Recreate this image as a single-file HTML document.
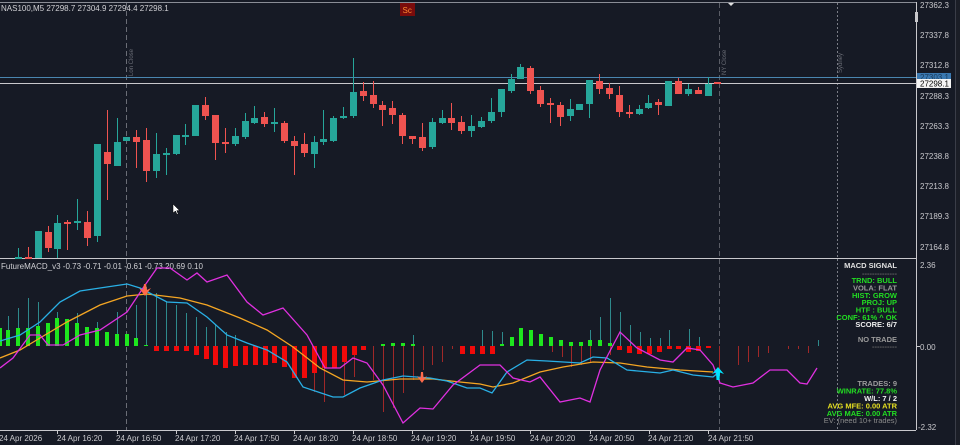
<!DOCTYPE html>
<html><head><meta charset="utf-8"><style>
html,body{margin:0;padding:0;background:#161a25;overflow:hidden}
svg{display:block}
text{font-family:"Liberation Sans",sans-serif}
</style></head><body>
<svg width="960" height="445" viewBox="0 0 960 445" xmlns="http://www.w3.org/2000/svg">
<rect width="960" height="445" fill="#161a25"/>
<rect x="955" y="0" width="5" height="445" fill="#1b1e27"/>
<line x1="955.5" y1="0" x2="955.5" y2="445" stroke="#3a3d48"/>
<!-- borders -->
<line x1="0" y1="2.5" x2="916" y2="2.5" stroke="#8a8d96"/>
<line x1="916.5" y1="2" x2="916.5" y2="430" stroke="#c8c8cc"/>
<line x1="0" y1="258.5" x2="916" y2="258.5" stroke="#c8c8cc"/>
<line x1="0" y1="430.5" x2="916" y2="430.5" stroke="#c8c8cc"/>
<rect x="915" y="12" width="3" height="10" fill="#c8c8cc"/>
<!-- session lines -->
<line x1="126.5" y1="3" x2="126.5" y2="430" stroke="#6a6d76" stroke-dasharray="5,3"/>
<line x1="719.5" y1="3" x2="719.5" y2="430" stroke="#5a5d66" stroke-dasharray="5,3"/>
<line x1="837.5" y1="3" x2="837.5" y2="430" stroke="#7a7d86" stroke-dasharray="2,2"/>
<text transform="translate(133,76) rotate(-90)" font-size="6" fill="#6a6d76">Lon Close</text>
<text transform="translate(726,75) rotate(-90)" font-size="6" fill="#6a6d76">NY Close</text>
<text transform="translate(842,73) rotate(-90)" font-size="6" fill="#6a6d76">Sydney</text>
<!-- price lines -->
<line x1="0" y1="77.5" x2="916" y2="77.5" stroke="#4a86b0"/>
<line x1="0" y1="83.5" x2="916" y2="83.5" stroke="#c8c8cc"/>
<!-- candles green -->
<g fill="#26a69a">
<rect x="18" y="248" width="1" height="11"/><rect x="15" y="257" width="7" height="2"/>
<rect x="38" y="231" width="1" height="27"/><rect x="35" y="231" width="7" height="27"/>
<rect x="57" y="215" width="1" height="43"/><rect x="54" y="223" width="7" height="26"/>
<rect x="77" y="199" width="1" height="31"/><rect x="74" y="221" width="7" height="2"/>
<rect x="97" y="144" width="1" height="98"/><rect x="94" y="144" width="7" height="92"/>
<rect x="117" y="118" width="1" height="48"/><rect x="114" y="142" width="7" height="24"/>
<rect x="123" y="137" width="7" height="4"/>
<rect x="156" y="133" width="1" height="45"/><rect x="153" y="154" width="7" height="17"/>
<rect x="166" y="148" width="1" height="27"/><rect x="163" y="153" width="7" height="2"/>
<rect x="176" y="135" width="1" height="20"/><rect x="173" y="135" width="7" height="19"/>
<rect x="185" y="124" width="1" height="21"/><rect x="182" y="135" width="7" height="2"/>
<rect x="192" y="105" width="7" height="31"/>
<rect x="235" y="128" width="1" height="18"/><rect x="232" y="136" width="7" height="8"/>
<rect x="245" y="113" width="1" height="26"/><rect x="242" y="121" width="7" height="16"/>
<rect x="254" y="106" width="1" height="18"/><rect x="251" y="118" width="7" height="5"/>
<rect x="274" y="108" width="1" height="24"/><rect x="271" y="122" width="7" height="2"/>
<rect x="314" y="136" width="1" height="32"/><rect x="311" y="142" width="7" height="12"/>
<rect x="323" y="110" width="1" height="35"/><rect x="320" y="139" width="7" height="3"/>
<rect x="333" y="116" width="1" height="26"/><rect x="330" y="118" width="7" height="23"/>
<rect x="343" y="107" width="1" height="12"/><rect x="340" y="116" width="7" height="2"/>
<rect x="353" y="58" width="1" height="60"/><rect x="350" y="92" width="7" height="24"/>
<rect x="432" y="118" width="1" height="31"/><rect x="429" y="122" width="7" height="25"/>
<rect x="442" y="110" width="1" height="14"/><rect x="439" y="118" width="7" height="5"/>
<rect x="471" y="115" width="1" height="22"/><rect x="468" y="126" width="7" height="5"/>
<rect x="481" y="117" width="1" height="11"/><rect x="478" y="121" width="7" height="6"/>
<rect x="491" y="98" width="1" height="25"/><rect x="488" y="112" width="7" height="9"/>
<rect x="501" y="89" width="1" height="28"/><rect x="498" y="89" width="7" height="23"/>
<rect x="511" y="74" width="1" height="19"/><rect x="508" y="79" width="7" height="12"/>
<rect x="517" y="67" width="7" height="12"/><rect x="520" y="64" width="1" height="4"/>
<rect x="570" y="99" width="1" height="22"/><rect x="567" y="109" width="7" height="7"/>
<rect x="576" y="104" width="7" height="6"/>
<rect x="589" y="80" width="1" height="38"/><rect x="586" y="80" width="7" height="24"/>
<rect x="639" y="105" width="1" height="10"/><rect x="636" y="109" width="7" height="5"/>
<rect x="648" y="95" width="1" height="14"/><rect x="645" y="103" width="7" height="5"/>
<rect x="665" y="81" width="7" height="25"/>
<rect x="688" y="84" width="1" height="12"/><rect x="685" y="89" width="7" height="5"/>
<rect x="708" y="77" width="1" height="19"/><rect x="705" y="84" width="7" height="12"/>
</g>
<g fill="#ef5350">
<rect x="28" y="247" width="1" height="12"/><rect x="25" y="257" width="7" height="2"/>
<rect x="48" y="226" width="1" height="26"/><rect x="45" y="232" width="7" height="16"/>
<rect x="67" y="220" width="1" height="30"/><rect x="64" y="222" width="7" height="2"/>
<rect x="87" y="211" width="1" height="35"/><rect x="84" y="222" width="7" height="16"/>
<rect x="107" y="110" width="1" height="90"/><rect x="104" y="152" width="7" height="12"/>
<rect x="136" y="130" width="1" height="38"/><rect x="133" y="137" width="7" height="5"/>
<rect x="146" y="128" width="1" height="54"/><rect x="143" y="140" width="7" height="31"/>
<rect x="205" y="97" width="1" height="23"/><rect x="202" y="105" width="7" height="11"/>
<rect x="215" y="115" width="1" height="45"/><rect x="212" y="115" width="7" height="28"/>
<rect x="225" y="128" width="1" height="25"/><rect x="222" y="142" width="7" height="2"/>
<rect x="264" y="112" width="1" height="15"/><rect x="261" y="117" width="7" height="7"/>
<rect x="284" y="121" width="1" height="22"/><rect x="281" y="123" width="7" height="18"/>
<rect x="294" y="136" width="1" height="39"/><rect x="291" y="141" width="7" height="5"/>
<rect x="304" y="133" width="1" height="24"/><rect x="301" y="144" width="7" height="9"/>
<rect x="363" y="82" width="1" height="19"/><rect x="360" y="91" width="7" height="5"/>
<rect x="373" y="81" width="1" height="27"/><rect x="370" y="95" width="7" height="9"/>
<rect x="382" y="101" width="1" height="25"/><rect x="379" y="105" width="7" height="5"/>
<rect x="392" y="101" width="1" height="23"/><rect x="389" y="108" width="7" height="7"/>
<rect x="402" y="113" width="1" height="31"/><rect x="399" y="115" width="7" height="21"/>
<rect x="412" y="136" width="1" height="8"/><rect x="409" y="136" width="7" height="3"/>
<rect x="422" y="123" width="1" height="28"/><rect x="419" y="137" width="7" height="11"/>
<rect x="451" y="103" width="1" height="27"/><rect x="448" y="118" width="7" height="5"/>
<rect x="461" y="116" width="1" height="18"/><rect x="458" y="122" width="7" height="9"/>
<rect x="530" y="66" width="1" height="28"/><rect x="527" y="68" width="7" height="23"/>
<rect x="540" y="86" width="1" height="21"/><rect x="537" y="90" width="7" height="14"/>
<rect x="550" y="98" width="1" height="25"/><rect x="547" y="103" width="7" height="2"/>
<rect x="560" y="102" width="1" height="24"/><rect x="557" y="105" width="7" height="12"/>
<rect x="599" y="74" width="1" height="20"/><rect x="596" y="81" width="7" height="8"/>
<rect x="609" y="83" width="1" height="16"/><rect x="606" y="88" width="7" height="6"/>
<rect x="619" y="86" width="1" height="31"/><rect x="616" y="95" width="7" height="17"/>
<rect x="629" y="105" width="1" height="13"/><rect x="626" y="112" width="7" height="2"/>
<rect x="658" y="99" width="1" height="16"/><rect x="655" y="102" width="7" height="3"/>
<rect x="678" y="78" width="1" height="16"/><rect x="675" y="81" width="7" height="13"/>
<rect x="698" y="87" width="1" height="7"/><rect x="695" y="90" width="7" height="4"/>
<rect x="714" y="82" width="7" height="2"/>
</g>
<!-- cursor -->
<path d="M173 204 L173 213 L175.5 211 L177 214.5 L178.2 214 L176.8 210.6 L179.5 210.5 Z" fill="#fff" stroke="#000" stroke-width="0.5"/>
<!-- header -->
<text x="1" y="11" font-size="8" fill="#d0d0d4">NAS100,M5  27298.7 27304.9 27294.4 27298.1</text>
<rect x="400" y="3" width="15" height="13" fill="#7a0c0c"/>
<text x="402.5" y="13" font-size="8" fill="#ff8a30">Sc</text>
<path d="M728 3 L734 3 L731 6 Z" fill="#e0e0e0"/>
<!-- price axis -->
<g font-size="8" fill="#c8c8cc">
<text x="920" y="8">27362.3</text>
<text x="920" y="38">27337.8</text>
<text x="920" y="68">27312.8</text>
<text x="920" y="99">27288.3</text>
<text x="920" y="129">27263.3</text>
<text x="920" y="159">27238.8</text>
<text x="920" y="189">27213.8</text>
<text x="920" y="219">27189.3</text>
<text x="920" y="250">27164.8</text>
</g>
<rect x="917" y="73" width="34" height="8" fill="#3a78b0"/>
<text x="920" y="80" font-size="8" fill="#1a3a5a">27303.1</text>
<rect x="917" y="79" width="34" height="9" fill="#f4f4f4"/>
<text x="920" y="86.5" font-size="8" fill="#000">27298.1</text>
<g font-size="8" fill="#c8c8cc">
<text x="920" y="268">2.36</text>
<text x="920" y="350">0.00</text>
<text x="918" y="430">-2.32</text>
</g>
<line x1="916" y1="346.5" x2="920" y2="346.5" stroke="#c8c8cc"/>
<!-- indicator label -->
<text x="1" y="269" font-size="8" fill="#d0d0d4">FutureMACD_v3 -0.73 -0.71 -0.01 -0.61 -0.73 20.69 0.10</text>
<!-- thin teal projections -->
<g stroke="#2e8a8c" stroke-width="1">
<path d="M8.5 316V346M18.5 308V346M28.5 298V346M38.5 302V346M57.5 312V346M77.5 313V346M97.5 322V346M117.5 312V346M136.5 305V346M146.5 287V346M156.5 293V346M166.5 302V346M176.5 305V346M186.5 313V346M196.5 317V346M206.5 327V346M215.5 325V346M226.5 332V346M235.5 335V346M413.5 335V346M482.5 330V346M492.5 331V346M502.5 332V346M590.5 330V346M600.5 317V346M610.5 298V346M620.5 312V346M630.5 325V346M640.5 332V346M650.5 338V346M660.5 338V346M669.5 330V346M689.5 329V346M699.5 337V346M818.5 340V346"/>
</g>
<!-- thin dark red -->
<g stroke="#a02828" stroke-width="1">
<path d="M314.5 346V392M324.5 346V402M334.5 346V365M344.5 346V395M354.5 346V377M373.5 346V380M383.5 346V412M393.5 346V408M403.5 346V393M413.5 346V380M423.5 346V370M432.5 346V365M442.5 346V362M452.5 346V349M552.5 346V352M562.5 346V357M571.5 346V367M581.5 346V365M590.5 346V363M610.5 346V355M719.5 346V370M738.5 346V365M748.5 346V362M758.5 346V357M768.5 346V353M788.5 346V349M798.5 346V349M808.5 346V353"/>
</g>
<!-- green hist -->
<g fill="#1ee61e">
<rect x="-2" y="328" width="4" height="18"/>
<rect x="6" y="330" width="4" height="16"/><rect x="16" y="328" width="4" height="18"/><rect x="26" y="328" width="4" height="18"/>
<rect x="36" y="326" width="4" height="20"/><rect x="46" y="323" width="4" height="23"/><rect x="55" y="318" width="4" height="28"/>
<rect x="65" y="319" width="4" height="27"/><rect x="75" y="323" width="4" height="23"/><rect x="85" y="327" width="4" height="19"/>
<rect x="95" y="328" width="4" height="18"/><rect x="105" y="332" width="4" height="14"/><rect x="115" y="334" width="4" height="12"/>
<rect x="125" y="334" width="4" height="12"/><rect x="134" y="338" width="4" height="8"/><rect x="144" y="345" width="4" height="1"/>
<rect x="381" y="344" width="4" height="2"/><rect x="391" y="343" width="4" height="3"/><rect x="401" y="343" width="4" height="3"/><rect x="411" y="344" width="4" height="2"/>
<rect x="500" y="344" width="4" height="2"/><rect x="510" y="337" width="4" height="9"/><rect x="519" y="328" width="4" height="18"/>
<rect x="529" y="330" width="4" height="16"/><rect x="539" y="334" width="4" height="12"/><rect x="549" y="337" width="4" height="9"/>
<rect x="559" y="340" width="4" height="6"/><rect x="569" y="342" width="4" height="4"/><rect x="579" y="342" width="4" height="4"/>
<rect x="588" y="340" width="4" height="6"/><rect x="598" y="340" width="4" height="6"/><rect x="608" y="343" width="4" height="3"/>
</g>
<!-- red hist -->
<g fill="#f00a0a">
<rect x="154" y="346" width="5" height="5"/><rect x="164" y="346" width="5" height="5"/><rect x="174" y="346" width="5" height="5"/>
<rect x="184" y="346" width="5" height="5"/><rect x="194" y="346" width="5" height="9"/><rect x="204" y="346" width="5" height="13"/>
<rect x="213" y="346" width="5" height="19"/><rect x="223" y="346" width="5" height="22"/><rect x="233" y="346" width="5" height="20"/>
<rect x="243" y="346" width="5" height="19"/><rect x="253" y="346" width="5" height="19"/><rect x="263" y="346" width="5" height="19"/>
<rect x="272" y="346" width="5" height="17"/><rect x="282" y="346" width="5" height="21"/><rect x="292" y="346" width="5" height="32"/>
<rect x="302" y="346" width="5" height="32"/><rect x="312" y="346" width="5" height="27"/><rect x="322" y="346" width="5" height="22"/>
<rect x="332" y="346" width="5" height="22"/><rect x="342" y="346" width="5" height="16"/><rect x="352" y="346" width="5" height="9"/>
<rect x="361" y="346" width="5" height="4"/>
<rect x="460" y="346" width="5" height="8"/><rect x="470" y="346" width="5" height="8"/><rect x="480" y="346" width="5" height="8"/><rect x="490" y="346" width="5" height="8"/>
<rect x="617" y="346" width="5" height="4"/><rect x="627" y="346" width="5" height="7"/><rect x="637" y="346" width="5" height="8"/>
<rect x="647" y="346" width="5" height="8"/><rect x="657" y="346" width="5" height="6"/><rect x="667" y="346" width="5" height="3"/>
<rect x="676" y="346" width="5" height="3"/><rect x="686" y="346" width="5" height="6"/><rect x="696" y="346" width="5" height="5"/><rect x="706" y="346" width="5" height="2"/>
</g>
<!-- lines -->
<polyline fill="none" stroke="#f5a623" stroke-width="1.3" points="0,358 20,350 40,338 67,322 100,305 127,296 147,294 180,298 207,305 240,318 267,330 293,347 320,368 343,380 367,382 400,379 433,379 460,382 480,384 493,387 513,383 540,372 563,367 593,362 620,363 647,367 680,370 713,372"/>
<polyline fill="none" stroke="#29b0e6" stroke-width="1.3" points="0,341 20,335 40,322 60,302 80,291 100,288 127,284 140,288 167,302 187,303 207,317 227,335 247,343 267,350 287,362 303,387 333,397 343,397 360,388 383,380 403,376 430,378 447,381 467,388 480,388 492,393 507,372 527,360 547,361 580,363 593,357 607,358 627,370 660,373 673,370 693,375 713,377 718,373"/>
<polyline fill="none" stroke="#e030e0" stroke-width="1.3" points="0,368 13,358 30,335 40,335 48,345 63,345 80,335 100,330 127,312 143,288 157,268 170,268 187,280 197,273 207,282 227,275 247,302 263,315 283,308 307,335 325,368 340,368 353,358 367,363 383,385 403,423 420,408 433,409 453,385 480,365 500,365 513,378 530,382 540,377 560,402 580,398 590,402 600,370 620,332 637,348 660,360 673,362 687,348 700,350 713,365 720,383 733,387 753,383 770,370 787,370 800,383 807,384 817,368"/>
<!-- arrows -->
<path d="M145 296 L139 288 L143 290 L144 284 L146 284 L147 290 L151 288 Z" fill="#ff6a4a"/>
<path d="M422 383 L417 376 L420.5 378 L421 372 L423 372 L423.5 378 L427 376 Z" fill="#ff6a4a"/>
<path d="M718 367 L712 374 L716 372.5 L716.5 380 L719.5 380 L720 372.5 L724 374 Z" fill="#00e5ff"/>
<!-- signal panel -->
<g font-size="7.5" font-weight="bold" text-anchor="end">
<text x="897" y="268" fill="#e0e0e0">MACD SIGNAL</text>
<text x="897" y="276" fill="#666">--------------</text>
<text x="897" y="283" fill="#22dd22">TRND:  BULL</text>
<text x="897" y="290.5" fill="#9a9a9a">VOLA:  FLAT</text>
<text x="897" y="298" fill="#22dd22">HIST:  GROW</text>
<text x="897" y="305" fill="#22dd22">PROJ:  UP</text>
<text x="897" y="312.5" fill="#22dd22">HTF :  BULL</text>
<text x="897" y="320" fill="#22dd22">CONF: 61% ^ OK</text>
<text x="897" y="327" fill="#f0f0f0">SCORE: 6/7</text>
<text x="897" y="342" fill="#9a9a9a">NO TRADE</text>
<text x="897" y="349" fill="#666">----------</text>
<text x="897" y="386" fill="#9a9a9a">TRADES: 9</text>
<text x="897" y="393.5" fill="#22dd22">WINRATE: 77.8%</text>
<text x="897" y="401" fill="#f0f0f0">W/L: 7 / 2</text>
<text x="897" y="408.5" fill="#e6e020">AVG MFE: 0.00 ATR</text>
<text x="897" y="416" fill="#22dd22">AVG MAE: 0.00 ATR</text>
<text x="897" y="423" fill="#8a8a8a" font-weight="normal">EV:  (need 10+ trades)</text>
</g>
<!-- time axis -->
<g stroke="#c8c8cc"><path d="M57.5 431v3M117.5 431v3M176.5 431v3M235.5 431v3M294.5 431v3M353.5 431v3M412.5 431v3M471.5 431v3M530.5 431v3M590.5 431v3M649.5 431v3M708.5 431v3"/></g>
<g font-size="8" fill="#c8c8cc">
<text x="-1" y="441">24 Apr 2026</text>
<text x="57" y="441">24 Apr 16:20</text>
<text x="116" y="441">24 Apr 16:50</text>
<text x="175" y="441">24 Apr 17:20</text>
<text x="234" y="441">24 Apr 17:50</text>
<text x="293" y="441">24 Apr 18:20</text>
<text x="352" y="441">24 Apr 18:50</text>
<text x="411" y="441">24 Apr 19:20</text>
<text x="470" y="441">24 Apr 19:50</text>
<text x="530" y="441">24 Apr 20:20</text>
<text x="589" y="441">24 Apr 20:50</text>
<text x="648" y="441">24 Apr 21:20</text>
<text x="708" y="441">24 Apr 21:50</text>
</g>
</svg>
</body></html>
